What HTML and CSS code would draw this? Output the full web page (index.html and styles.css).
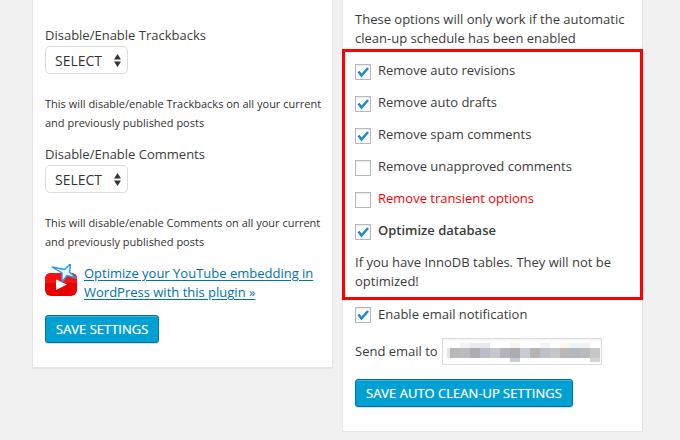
FILE: index.html
```html
<!DOCTYPE html>
<html lang="en">
<head>
    <meta charset="UTF-8">
    <meta name="viewport" content="width=device-width, initial-scale=1.0">
    <title>Clean-up Settings</title>
    <link rel="stylesheet" href="styles.css">
</head>
<body>
    <main class="columns">
        <form class="panel">
            <div class="field">
                <label for="trackbacks">Disable/Enable Trackbacks</label>
                <select id="trackbacks" class="select">
                    <option>SELECT</option>
                    <option>ENABLE</option>
                    <option>DISABLE</option>
                </select>
                <p class="hint">This will disable/enable Trackbacks on all your current and previously published posts</p>
            </div>
            <div class="field">
                <label for="comments">Disable/Enable Comments</label>
                <select id="comments" class="select">
                    <option>SELECT</option>
                    <option>ENABLE</option>
                    <option>DISABLE</option>
                </select>
                <p class="hint">This will disable/enable Comments on all your current and previously published posts</p>
            </div>
            <div class="promo">
                <svg class="promo-icon" width="32" height="32" viewBox="0 0 32 32" aria-hidden="true">
                    <rect x="0" y="9" width="32" height="23" rx="6" fill="#e80000"/>
                    <path d="M0 19V15Q0 9 6 9H26Q32 9 32 15V19Z" fill="#fa1010"/>
                    <path d="M11 15.500L22 20.500L11 26Z" fill="#fff"/>
                    <path d="M7 3L19.500 5.500L25.500 0L24.500 8L31 14L22 11.500L17 18L17 9Z" fill="#e6f6ff" stroke="#2a9be6" stroke-width="1.400" stroke-linejoin="round"/>
                </svg>
                <a href="#">Optimize your YouTube embedding in WordPress with this plugin »</a>
            </div>
            <button type="submit" class="btn">SAVE SETTINGS</button>
        </form>

        <form class="panel">
            <p class="intro">These options will only work if the automatic clean-up schedule has been enabled</p>
            <div class="highlight">
                <label class="check"><input type="checkbox" checked> Remove auto revisions</label>
                <label class="check"><input type="checkbox" checked> Remove auto drafts</label>
                <label class="check"><input type="checkbox" checked> Remove spam comments</label>
                <label class="check"><input type="checkbox"> Remove unapproved comments</label>
                <label class="check danger"><input type="checkbox"> Remove transient options</label>
                <label class="check strong"><input type="checkbox" checked> Optimize database</label>
                <p class="note">If you have InnoDB tables. They will not be optimized!</p>
            </div>
            <label class="check notify"><input type="checkbox" checked> Enable email notification</label>
            <div class="email-row">
                <label for="email">Send email to</label>
                <div class="email-box">
                    <input type="email" id="email" class="email">
                    <svg class="mosaic" width="153" height="19" viewBox="0 0 153 19" shape-rendering="crispEdges" aria-hidden="true">
                        <g fill="#f3f3f3">
                            <rect x="13" width="10" height="5"/>
                            <rect x="23" width="20" height="5" fill="#e9e9ec"/>
                            <rect x="63" width="10" height="5" fill="#f8f5f0"/>
                            <rect x="93" width="10" height="5"/>
                            <rect x="113" width="10" height="5" fill="#fcf6ee"/>
                            <rect x="123" width="10" height="5" fill="#edf4fb"/>
                            <rect x="133" width="10" height="5"/>
                        </g>
                        <rect x="0" y="5" width="3" height="10" fill="#ebe3d5"/>
                        <rect x="3" y="5" width="10" height="10" fill="#b8b8ba"/>
                        <rect x="13" y="5" width="10" height="10" fill="#bbbbbc"/>
                        <rect x="23" y="5" width="10" height="10" fill="#adacb0"/>
                        <rect x="33" y="5" width="10" height="10" fill="#b9bccb"/>
                        <rect x="43" y="5" width="10" height="10" fill="#c6c7c9"/>
                        <rect x="53" y="5" width="10" height="10" fill="#b3b4be"/>
                        <rect x="63" y="5" width="10" height="10" fill="#adacb0"/>
                        <rect x="73" y="5" width="10" height="10" fill="#c8cbd2"/>
                        <rect x="83" y="5" width="10" height="10" fill="#b8b2b2"/>
                        <rect x="93" y="5" width="10" height="10" fill="#bcbfcc"/>
                        <rect x="103" y="5" width="10" height="10" fill="#c5c7c9"/>
                        <rect x="113" y="5" width="10" height="10" fill="#bab8b6"/>
                        <rect x="123" y="5" width="10" height="10" fill="#b2b8c2"/>
                        <rect x="133" y="5" width="10" height="10" fill="#babbc0"/>
                        <rect x="143" y="5" width="10" height="10" fill="#c8c8c9"/>
                        <rect x="63" y="15" width="10" height="4" fill="#cbccd3"/>
                        <rect x="143" y="15" width="10" height="4" fill="#d3d3d5"/>
                    </svg>
                </div>
            </div>
            <button type="submit" class="btn">SAVE AUTO CLEAN-UP SETTINGS</button>
        </form>
    </main>
</body>
</html>
```

FILE: styles.css
```css
* {
    box-sizing: border-box;
}
body {
    margin: 0;
    background-color: #f1f1f1;
    color: #3c3c3c;
    font-family: "Open Sans", sans-serif;
    font-size: 13px;
    line-height: 19px;
}
p {
    margin: 0;
}
.columns {
    display: grid;
    grid-template-columns: 1fr 1fr;
    align-items: start;
    gap: 9px;
    padding: 0 37px 0 32px;
}
.panel {
    background-color: #fff;
    border: 1px solid #e5e5e5;
    border-top: none;
    box-shadow: 0 1px 1px rgba(0, 0, 0, 0.04);
    padding: 10px 8px 24px 12px;
}
.field {
    display: flex;
    flex-direction: column;
    align-items: flex-start;
    margin-bottom: 13px;
}
.field:first-child {
    margin-top: 16px;
}
.select {
    appearance: none;
    width: 83px;
    height: 28px;
    margin: 1px 0 20px;
    padding: 0 9px;
    border: 1px solid #ddd;
    border-radius: 5px;
    color: #32373c;
    font: 14px "Open Sans", sans-serif;
    background: #fff url("data:image/svg+xml,%3Csvg xmlns='http://www.w3.org/2000/svg' width='7' height='13'%3E%3Cpath d='M0 5.500L3.500 0L7 5.500ZM0 7.500L3.500 13L7 7.500Z' fill='%2332373c'/%3E%3C/svg%3E") no-repeat right 6px center;
}
.hint {
    color: #333;
    font-size: 11px;
}
.promo {
    display: flex;
    gap: 7px;
    margin-bottom: 13px;
}
a {
    color: #0073aa;
    text-underline-offset: 2px;
}
.promo-icon {
    flex: none;
}
.btn {
    display: block;
    height: 28px;
    padding: 0 10px;
    border: 1px solid #0073aa;
    border-radius: 3px;
    background-color: #00a0d2;
    box-shadow: inset 0 1px 0 rgba(120, 200, 230, 0.5), 0 1px 0 rgba(0, 0, 0, 0.15);
    color: #fff;
    font: 500 13px "Open Sans", sans-serif;
    text-shadow: 0 0 1px rgba(255, 255, 255, 0.6);
    cursor: pointer;
}
.highlight {
    margin: 1px -9px 5px -13px;
    padding: 9px 10px 6px;
    border: 3px solid #f00;
}
.check {
    display: flex;
    gap: 7px;
    margin-bottom: 13px;
}
.check input {
    appearance: none;
    flex: none;
    width: 16px;
    height: 16px;
    margin: 3px 0 0;
    border: 1px solid #b4b9be;
    background-color: #fff;
    box-shadow: inset 0 1px 2px rgba(0, 0, 0, 0.1);
}
.check input:checked {
    background: url("data:image/svg+xml,%3Csvg xmlns='http://www.w3.org/2000/svg' width='14' height='14'%3E%3Cpath d='M2.500 6.500L5.500 10.500L12 3' fill='none' stroke='%231e8cbe' stroke-width='2.600'/%3E%3C/svg%3E") no-repeat center;
}
.notify {
    align-items: center;
}
.notify input {
    margin: 0;
}
.danger {
    color: #f00;
}
.strong {
    font-weight: 600;
}
.email-row {
    display: flex;
    align-items: center;
    gap: 4px;
    margin: 14px 0;
}
.email-box {
    position: relative;
}
.email {
    display: block;
    width: 160px;
    height: 27px;
    border: 1px solid #ddd;
    box-shadow: inset 0 1px 2px rgba(0, 0, 0, 0.07);
}
.mosaic {
    position: absolute;
    top: 5px;
    left: 5px;
}
```
